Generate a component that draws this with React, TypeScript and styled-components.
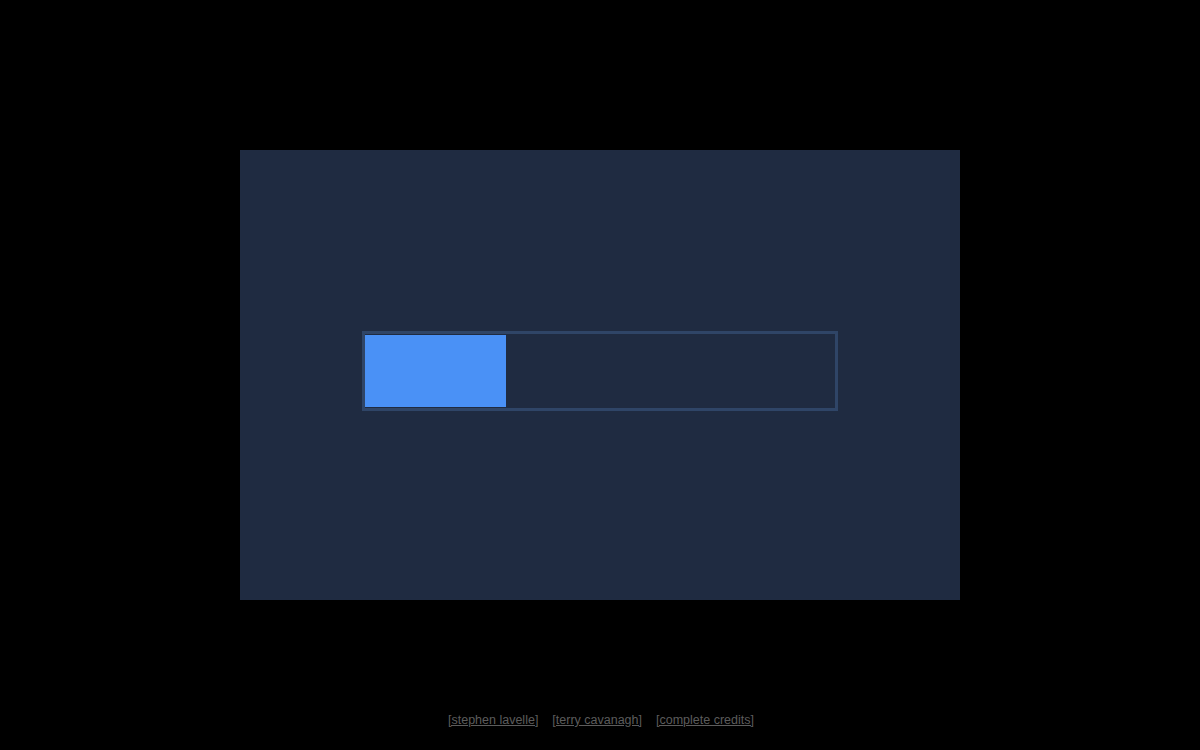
import React from "react";
import styled, { createGlobalStyle } from "styled-components";

const Global = createGlobalStyle`
  html, body { margin: 0; padding: 0; background: #000; height: 100%; overflow: hidden; }
  #root { height: 100%; }
`;

const Page = styled.div`
  height: 750px;
  display: flex;
  flex-direction: column;
  align-items: center;
  background: #000;
`;

const Canvas = styled.div`
  margin-top: 150px;
  width: 720px;
  height: 450px;
  background: #1f2b41;
  display: flex;
  align-items: center;
  justify-content: center;
`;

const Track = styled.div`
  width: 470px;
  height: 72px;
  border: 3px solid #2f4567;
  background: #1f2b41;
  padding: 1px 0;
  display: flex;
  margin-bottom: 8px;
`;

const Fill = styled.div`
  height: 100%;
  background: #4a91f6;
`;

const Footer = styled.div`
  margin-top: 113px;
  margin-left: 2px;
  display: flex;
  gap: 14px;
  font-family: "Liberation Sans", Arial, sans-serif;
  font-size: 12.5px;
`;

const Link = styled.a`
  color: #5c5c5c;
  text-decoration: underline;
`;

export default function App() {
  const progress = 0.3;
  return (
    <>
      <Global />
      <Page>
        <Canvas>
          <Track>
            <Fill style={{ width: `${progress * 100}%` }} />
          </Track>
        </Canvas>
        <Footer>
          <Link href="#">[stephen lavelle]</Link>
          <Link href="#">[terry cavanagh]</Link>
          <Link href="#">[complete credits]</Link>
        </Footer>
      </Page>
    </>
  );
}
